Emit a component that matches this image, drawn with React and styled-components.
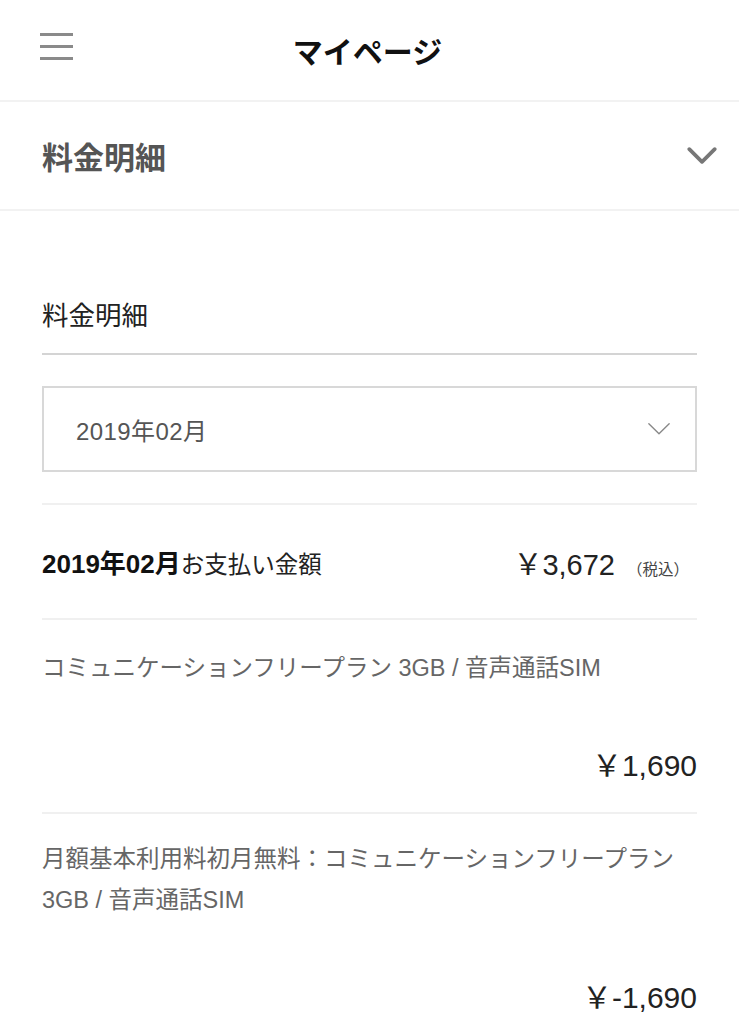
import React from 'react'
import styled, { createGlobalStyle } from 'styled-components'

const Global = createGlobalStyle`
  body {
    margin: 0;
    background: #fff;
    font-family: "Liberation Sans", "Noto Sans CJK JP", sans-serif;
    color: #222;
  }
`

const Page = styled.div`
  width: 739px;
`

const Header = styled.header`
  height: 100px;
  display: flex;
  align-items: center;
  justify-content: center;
  position: relative;
  border-bottom: 2px solid #f2f2f2;
`

const Burger = styled.div`
  position: absolute;
  left: 40px;
  top: 33px;
  width: 33px;
  display: flex;
  flex-direction: column;
  gap: 9px;
  span {
    display: block;
    height: 3px;
    background: #8a8a8a;
  }
`

const Title = styled.h1`
  margin: 0 0 0 -4px;
  font-size: 30px;
  font-weight: 700;
  color: #111;
  font-family: "Noto Sans CJK JP", sans-serif;
`

const Accordion = styled.div`
  height: 107px;
  padding: 0 22px 0 42px;
  display: flex;
  align-items: center;
  justify-content: space-between;
  border-bottom: 2px solid #f2f2f2;
`

const AccordionLabel = styled.div`
  font-family: "Noto Sans CJK JP", sans-serif;
  font-size: 31px;
  font-weight: 700;
  color: #555;
`

const Content = styled.div`
  padding: 0 42px;
`

const SectionTitle = styled.div`
  padding: 83px 0 19px;
  font-family: "Noto Sans CJK JP", sans-serif;
  font-size: 26.5px;
  line-height: 40px;
  color: #222;
  border-bottom: 2px solid #d4d4d4;
`

const Select = styled.div`
  margin-top: 31px;
  height: 82px;
  border: 2px solid #d8d8d8;
  display: flex;
  align-items: center;
  justify-content: space-between;
  padding: 0 24px 0 32px;
  font-size: 24px;
  letter-spacing: 0.4px;
  color: #555;
`

const Rows = styled.div`
  margin-top: 31px;
`

const Row = styled.div`
  border-top: 2px solid #f0f0f0;
  padding: ${(p) => p.pad || '27px 0'};
`

const PayRow = styled(Row)`
  height: 113px;
  padding: 0;
  display: flex;
  align-items: center;
  justify-content: space-between;
  font-size: 23.5px;
  color: #222;
`

const Bold = styled.b`
  font-size: 26px;
  font-weight: 700;
  color: #111;
`

const Price = styled.div`
  display: flex;
  align-items: baseline;
  gap: 12px;
  padding-right: 8px;
  font-size: 29px;
  color: #222;
`

const Tax = styled.span`
  font-size: 15.5px;
  color: #444;
`

const Desc = styled.div`
  font-size: 23.5px;
  line-height: 41px;
  color: #666;
`

const Amount = styled.div`
  margin-top: 56px;
  text-align: right;
  font-size: 30px;
  line-height: 41px;
  color: #222;
`

const Chevron = ({ size = 28, stroke = 3, color = '#777' }) => (
  <svg width={size} height={size * 0.6} viewBox="0 0 28 17" fill="none">
    <polyline points="2,2 14,14 26,2" stroke={color} strokeWidth={stroke} strokeLinecap="round" strokeLinejoin="round" />
  </svg>
)

const App = () => {
  return (
    <Page>
      <Global />
      <Header>
        <Burger>
          <span />
          <span />
          <span />
        </Burger>
        <Title>マイページ</Title>
      </Header>
      <Accordion>
        <AccordionLabel>料金明細</AccordionLabel>
        <Chevron size={30} stroke={3.5} color="#777" />
      </Accordion>
      <Content>
        <SectionTitle>料金明細</SectionTitle>
        <Select>
          <span>2019年02月</span>
          <Chevron size={24} stroke={1.6} color="#888" />
        </Select>
        <Rows>
          <PayRow>
            <div>
              <Bold>2019年02月</Bold>お支払い金額
            </div>
            <Price>
              ￥3,672<Tax>（税込）</Tax>
            </Price>
          </PayRow>
          <Row pad="28px 0 26px">
            <Desc>コミュニケーションフリープラン 3GB / 音声通話SIM</Desc>
            <Amount>￥1,690</Amount>
          </Row>
          <Row pad="25px 0 26px">
            <Desc>
              月額基本利用料初月無料：コミュニケーションフリープラン
              <br />
              3GB / 音声通話SIM
            </Desc>
            <Amount>￥-1,690</Amount>
          </Row>
        </Rows>
      </Content>
    </Page>
  )
}

export default App
